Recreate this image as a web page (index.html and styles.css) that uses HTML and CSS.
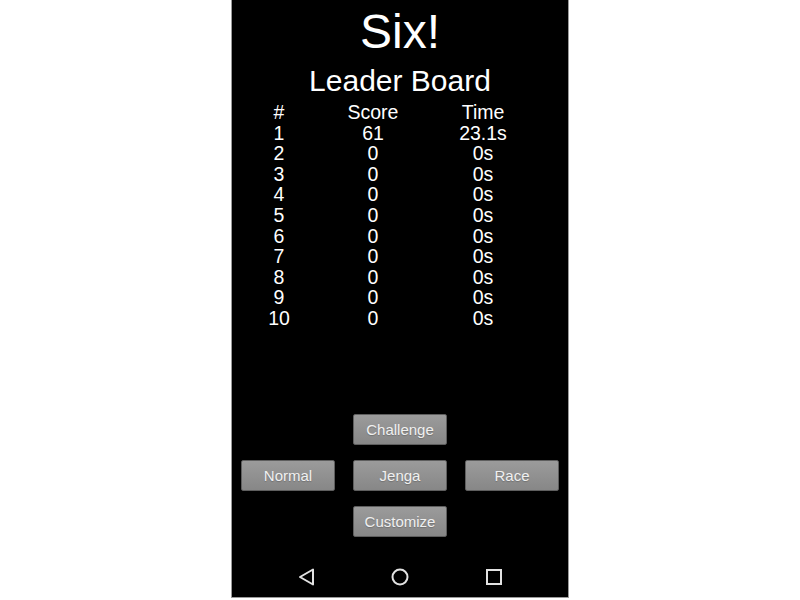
FILE: index.html
```html
<!DOCTYPE html>
<html lang="en">
<head>
  <meta charset="UTF-8" />
  <meta name="viewport" content="width=device-width, initial-scale=1.0"/>
  <title>Six!</title>
  <link rel="stylesheet" href="styles.css">
</head>
<body>
  <div class="phone">
    <h1 class="title">Six!</h1>
    <h2 class="subtitle">Leader Board</h2>

    <div class="board">
      <span>#</span><span>Score</span><span>Time</span>
      <span>1</span><span>61</span><span>23.1s</span>
      <span>2</span><span>0</span><span>0s</span>
      <span>3</span><span>0</span><span>0s</span>
      <span>4</span><span>0</span><span>0s</span>
      <span>5</span><span>0</span><span>0s</span>
      <span>6</span><span>0</span><span>0s</span>
      <span>7</span><span>0</span><span>0s</span>
      <span>8</span><span>0</span><span>0s</span>
      <span>9</span><span>0</span><span>0s</span>
      <span>10</span><span>0</span><span>0s</span>
    </div>

    <div class="modes">
      <button class="btn challenge">Challenge</button>
      <button class="btn normal">Normal</button>
      <button class="btn jenga">Jenga</button>
      <button class="btn race">Race</button>
      <button class="btn customize">Customize</button>
    </div>

    <div class="navbar">
      <svg class="nav-icon" viewBox="0 0 20 20" width="20" height="20">
        <polygon points="3,10 16,2.5 16,17.5" fill="none" stroke="#e2e2e2" stroke-width="2" stroke-linejoin="round"/>
      </svg>
      <svg class="nav-icon" viewBox="0 0 20 20" width="20" height="20">
        <circle cx="10" cy="10" r="7.5" fill="none" stroke="#e2e2e2" stroke-width="2"/>
      </svg>
      <svg class="nav-icon" viewBox="0 0 20 20" width="20" height="20">
        <rect x="3" y="3" width="14" height="14" fill="none" stroke="#e2e2e2" stroke-width="2"/>
      </svg>
    </div>
  </div>
</body>
</html>
```

FILE: styles.css
```css
body {
  margin: 0;
  background-color: white;
  font-family: "Liberation Sans", Arial, sans-serif;
}

.phone {
  width: 336px;
  height: 597px;
  margin: 0 auto;
  background-color: black;
  color: white;
  border: 1px solid #9a9a9a;
  border-top: none;
  display: flex;
  flex-direction: column;
}

.title {
  margin: 4px 0 0;
  font-size: 48px;
  font-weight: normal;
  line-height: 55px;
  text-align: center;
}

.subtitle {
  margin: 4px 0 0;
  font-size: 30px;
  font-weight: normal;
  line-height: 35px;
  text-align: center;
}

.board {
  margin-top: 4px;
  display: grid;
  grid-template-columns: 94px 94px 126px;
  font-size: 19.5px;
  line-height: 20.6px;
  text-align: center;
}

.modes {
  margin-top: 85px;
  padding: 0 9px;
  display: grid;
  grid-template-columns: repeat(3, 94px);
  grid-template-rows: repeat(3, 31px);
  column-gap: 18px;
  row-gap: 15px;
}

.btn {
  font-family: "Liberation Sans", Arial, sans-serif;
  font-size: 15px;
  color: #f0f0f0;
  background: linear-gradient(#9b9b9b, #878787);
  border: 1px solid #5e5e5e;
  border-radius: 2px;
  text-shadow: 0 1px 1px rgba(0, 0, 0, 0.2);
  padding: 0;
  cursor: pointer;
}

.challenge { grid-column: 2; grid-row: 1; }
.normal { grid-column: 1; grid-row: 2; }
.jenga { grid-column: 2; grid-row: 2; }
.race { grid-column: 3; grid-row: 2; }
.customize { grid-column: 2; grid-row: 3; }

.navbar {
  margin-top: auto;
  height: 40px;
  display: flex;
  justify-content: center;
  align-items: center;
  gap: 73.5px;
}

.nav-icon {
  display: block;
}
```
